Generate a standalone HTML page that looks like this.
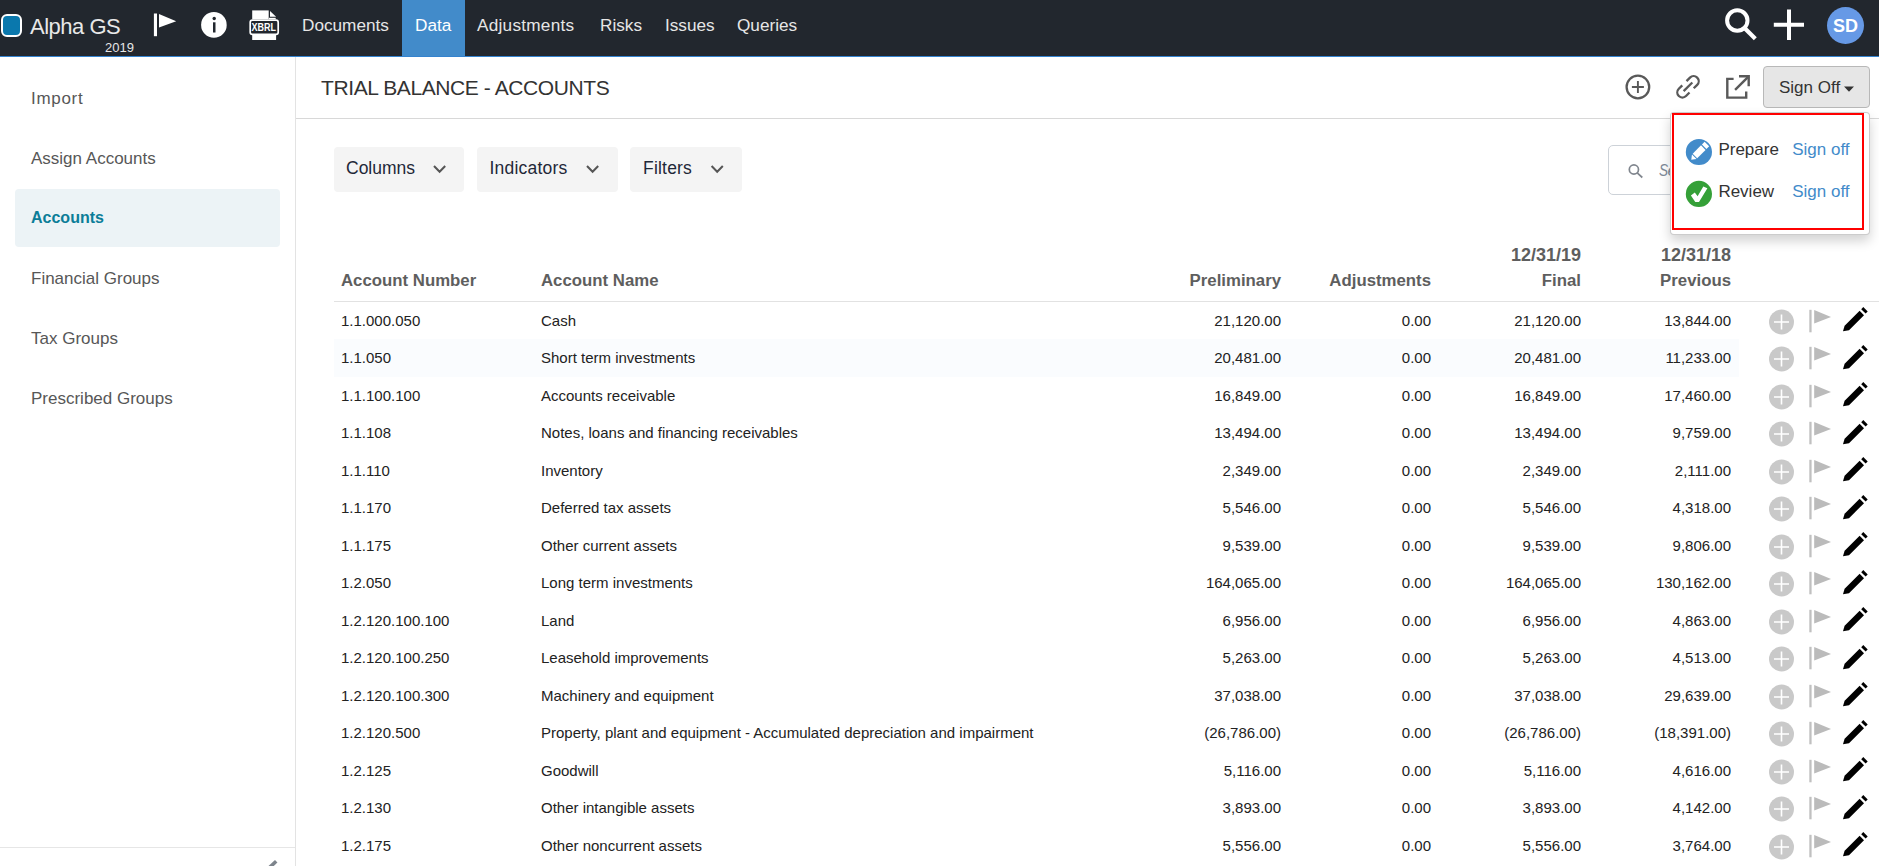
<!DOCTYPE html>
<html><head><meta charset="utf-8">
<style>
*{box-sizing:border-box;margin:0;padding:0}
html,body{width:1879px;height:866px;overflow:hidden;background:#fff;font-family:"Liberation Sans",sans-serif;position:relative}
.abs{position:absolute}
svg{display:block}
#nav{position:absolute;left:0;top:0;width:1879px;height:56px;background:#22272e}
#navline{position:absolute;left:0;top:56px;width:1879px;height:1px;background:#3483cf}
.nt{position:absolute;top:17.4px;font-size:17.2px;line-height:1;color:#e6e6e6;white-space:nowrap}
#datatab{position:absolute;left:402px;top:0;width:63px;height:56px;background:#428bca}
#side{position:absolute;left:0;top:57px;width:296px;height:809px;border-right:1px solid #e3e3e3}
.si{position:absolute;left:31px;font-size:17px;line-height:1;color:#575757;white-space:nowrap}
#active{position:absolute;left:15px;top:189px;width:265px;height:58px;background:#ecf3f6;border-radius:4px}
#title{position:absolute;left:321px;top:76.6px;font-size:21px;letter-spacing:-0.4px;line-height:1;color:#333;white-space:nowrap}
#hdrline{position:absolute;left:296px;top:118px;width:1583px;height:1px;background:#d8d8d8}
.fb{position:absolute;top:147px;height:44.5px;background:#f4f4f4;border-radius:4px}
.fbt{position:absolute;top:160px;font-size:17.5px;line-height:1;color:#1f2838;white-space:nowrap}
.th{position:absolute;font-size:16.8px;line-height:1;font-weight:bold;color:#5e5e5e;white-space:nowrap}
#thline{position:absolute;left:334px;top:301px;width:1545px;height:1px;background:#e2e2e2}
.td{position:absolute;font-size:15px;line-height:1;color:#222;white-space:nowrap}
.r{text-align:right}
</style></head><body>
<div id="nav"></div>
<div id="navline"></div>
<div id="datatab"></div>
<!-- logo -->
<div class="abs" style="left:1.1px;top:14.2px;width:21.4px;height:22.4px;border:2.4px solid #fff;border-radius:6px;background:#0a78ad"></div>
<div class="abs" style="left:30px;top:16.3px;font-size:22px;letter-spacing:-0.5px;line-height:1;color:#e8e8e8;white-space:nowrap">Alpha GS</div>
<div class="abs" style="left:105px;top:40.8px;font-size:13px;line-height:1;color:#e6e6e6">2019</div>
<!-- flag -->
<svg class="abs" style="left:150px;top:10px" width="30" height="30" viewBox="0 0 30 30"><rect x="3.9" y="3.5" width="3.1" height="22.7" fill="#fff"/><path d="M9 3.9L26.2 11.2L9 17.4Z" fill="#fff"/></svg>
<!-- info -->
<svg class="abs" style="left:200px;top:11px" width="28" height="28" viewBox="0 0 28 28"><circle cx="13.9" cy="13.9" r="12.8" fill="#fff"/><circle cx="14.2" cy="7.5" r="1.7" fill="#22272e"/><rect x="13" y="11.3" width="2.5" height="10.2" fill="#22272e"/></svg>
<!-- xbrl -->
<svg class="abs" style="left:245px;top:6px" width="40" height="38" viewBox="0 0 40 38"><rect x="7.2" y="4.4" width="16.5" height="8.8" fill="#fff"/><path d="M25 5L31.1 10.7H25Z" fill="#fff"/><rect x="23.9" y="11.8" width="6.8" height="1.4" fill="#fff"/><rect x="5.2" y="14.2" width="28" height="14.2" rx="2.2" fill="#22272e" stroke="#fff" stroke-width="1.7"/><text x="18.8" y="25" font-family="Liberation Sans" font-weight="bold" font-size="10.2" fill="#fff" text-anchor="middle" textLength="24.5" lengthAdjust="spacingAndGlyphs">XBRL</text><rect x="7.2" y="28.6" width="23.9" height="5.4" fill="#fff"/></svg>
<div class="nt" style="left:302px">Documents</div>
<div class="nt" style="left:415px;color:#fff">Data</div>
<div class="nt" style="left:477px;letter-spacing:0.25px">Adjustments</div>
<div class="nt" style="left:600px">Risks</div>
<div class="nt" style="left:665px">Issues</div>
<div class="nt" style="left:737px">Queries</div>
<!-- right nav -->
<svg class="abs" style="left:1720px;top:4px" width="42" height="42" viewBox="0 0 42 42"><circle cx="17.3" cy="16.5" r="10.2" fill="none" stroke="#fff" stroke-width="4"/><path d="M24.5 24L35.3 34.8" stroke="#fff" stroke-width="4.2"/></svg>
<svg class="abs" style="left:1770px;top:6px" width="38" height="38" viewBox="0 0 38 38"><path d="M19 3.5V34M3.8 18.8H34" stroke="#fff" stroke-width="4"/></svg>
<div class="abs" style="left:1826.8px;top:6.8px;width:37.4px;height:37.4px;border-radius:50%;background:#6699e6"></div>
<div class="abs" style="left:1827px;width:37px;top:16.7px;font-size:18px;line-height:1;font-weight:bold;color:#fff;text-align:center">SD</div>

<div id="side"></div>
<div id="active"></div>
<div class="si" style="top:90.1px;letter-spacing:0.7px">Import</div>
<div class="si" style="top:150.1px">Assign Accounts</div>
<div class="si" style="color:#0b7d98;font-weight:bold;font-size:16px;top:210.2px">Accounts</div>
<div class="si" style="top:270.1px">Financial Groups</div>
<div class="si" style="top:330.1px">Tax Groups</div>
<div class="si" style="top:390.1px">Prescribed Groups</div>
<div class="abs" style="left:0;top:847px;width:295px;height:1px;background:#e6e6e6"></div>
<svg class="abs" style="left:262px;top:855px" width="20" height="11" viewBox="0 0 20 11"><path d="M7 13L14.2 6.3" stroke="#7d848c" stroke-width="3.6"/></svg>

<div id="title">TRIAL BALANCE - ACCOUNTS</div>
<div id="hdrline"></div>
<!-- header icons -->
<svg class="abs" style="left:1620px;top:70px" width="136" height="34" viewBox="0 0 136 34">
<circle cx="17.9" cy="17" r="11.3" fill="none" stroke="#595959" stroke-width="2.3"/>
<path d="M17.9 10.9V23.1M11.9 17H23.9" stroke="#595959" stroke-width="1.9"/>
<g transform="translate(68 16.8) rotate(-45)" fill="none" stroke="#595959" stroke-width="2.3">
<path d="M3 -5.1H7.9A5.1 5.1 0 0 1 7.9 5.1H3"/>
<path d="M-3 5.1H-7.9A5.1 5.1 0 0 1 -7.9 -5.1H-3"/>
<path d="M-6.2 0H6.1"/>
</g>
<path d="M113.6 8.9H107.3V27.6H126.2V21.4" fill="none" stroke="#595959" stroke-width="2.4"/>
<path d="M119 6.2H128.7V16.3" fill="none" stroke="#595959" stroke-width="2.4"/>
<path d="M115.1 19.9L128.4 6.6" stroke="#595959" stroke-width="2.4"/>
</svg>
<div class="abs" style="left:1763px;top:66px;width:107px;height:42px;background:#e6e6e6;border:1px solid #b8b8b8;border-radius:4px"></div>
<div class="abs" style="left:1779px;top:78.8px;font-size:17px;line-height:1;color:#333;white-space:nowrap">Sign Off</div>
<svg class="abs" style="left:1843px;top:85px" width="12" height="8" viewBox="0 0 12 8"><path d="M1 1.5H11L6 6.8Z" fill="#333"/></svg>

<div class="fb" style="left:334px;width:130px"></div>
<div class="fb" style="left:477px;width:141px"></div>
<div class="fb" style="left:630px;width:112px"></div>
<div class="fbt" style="left:346px">Columns</div>
<div class="fbt" style="left:489.5px;letter-spacing:0.2px">Indicators</div>
<div class="fbt" style="left:643px;letter-spacing:0.2px">Filters</div>
<svg class="abs" style="left:430px;top:162px" width="320" height="14" viewBox="0 0 320 14"><g fill="none" stroke="#555" stroke-width="2"><path d="M4 4L9.6 9.8L15.2 4"/><path d="M157 4L162.6 9.8L168.2 4"/><path d="M281.6 4L287.2 9.8L292.8 4"/></g></svg>

<!-- search -->
<div class="abs" style="left:1608px;top:145px;width:250px;height:50px;border:1px solid #cdd2d8;border-radius:5px;background:#fff"></div>
<svg class="abs" style="left:1625px;top:160px" width="22" height="22" viewBox="0 0 22 22"><circle cx="8.9" cy="9.5" r="4.6" fill="none" stroke="#80868e" stroke-width="1.7"/><path d="M12.2 12.8L17.3 17.5" stroke="#80868e" stroke-width="1.7"/></svg>
<div class="abs" style="left:1658.5px;top:162.2px;font-size:17px;line-height:1;color:#7e8a99;font-style:italic;white-space:nowrap;transform:scaleX(0.8);transform-origin:0 0">S</div><div class="abs" style="left:1667.5px;top:162.2px;font-size:17px;line-height:1;color:#7e8a99;font-style:italic;white-space:nowrap">e</div>

<!-- table header -->
<div class="th" style="left:341px;top:272.7px">Account Number</div>
<div class="th" style="left:541px;top:272.7px">Account Name</div>
<div class="th r" style="right:598px;top:272.7px">Preliminary</div>
<div class="th r" style="right:448px;top:272.7px">Adjustments</div>
<div class="th r" style="right:298px;top:246.4px;font-size:18px">12/31/19</div>
<div class="th r" style="right:298px;top:272.7px">Final</div>
<div class="th r" style="right:148px;top:246.4px;font-size:18px">12/31/18</div>
<div class="th r" style="right:148px;top:272.7px">Previous</div>
<div id="thline"></div>
<div class="td" style="left:341px;top:312.60px">1.1.000.050</div>
<div class="td" style="left:541px;top:312.60px">Cash</div>
<div class="td r" style="right:598px;top:312.60px">21,120.00</div>
<div class="td r" style="right:448px;top:312.60px">0.00</div>
<div class="td r" style="right:298px;top:312.60px">21,120.00</div>
<div class="td r" style="right:148px;top:312.60px">13,844.00</div>
<svg class="abs" style="left:1768px;top:308.5px" width="27" height="26" viewBox="0 0 27 26"><circle cx="13.5" cy="13" r="12.5" fill="#c9c9c9"/><path d="M13.5 5.5v15M6 13h15" stroke="#fff" stroke-width="1.6"/></svg>
<svg class="abs" style="left:1808px;top:308.5px" width="24" height="25" viewBox="0 0 24 25"><rect x="1.3" y="0.8" width="2.3" height="22.5" fill="#c0c0c0"/><path d="M6.2 0.9L23 8L6.2 14.5Z" fill="#bbb"/></svg>
<svg class="abs" style="left:1842px;top:306.0px" width="26" height="27" viewBox="0 0 26 27"><path d="M1 25.3L2.6 19.8L17.6 4.8L22 9.2L7 24.2Z" fill="#000"/><path d="M19.2 3.2L21.3 1.1L25.7 5.5L23.6 7.6Z" fill="#000"/></svg>
<div class="abs" style="left:334px;top:339px;width:1405px;height:38px;background:#fafcfe"></div>
<div class="td" style="left:341px;top:350.10px">1.1.050</div>
<div class="td" style="left:541px;top:350.10px">Short term investments</div>
<div class="td r" style="right:598px;top:350.10px">20,481.00</div>
<div class="td r" style="right:448px;top:350.10px">0.00</div>
<div class="td r" style="right:298px;top:350.10px">20,481.00</div>
<div class="td r" style="right:148px;top:350.10px">11,233.00</div>
<svg class="abs" style="left:1768px;top:346.0px" width="27" height="26" viewBox="0 0 27 26"><circle cx="13.5" cy="13" r="12.5" fill="#c9c9c9"/><path d="M13.5 5.5v15M6 13h15" stroke="#fff" stroke-width="1.6"/></svg>
<svg class="abs" style="left:1808px;top:346.0px" width="24" height="25" viewBox="0 0 24 25"><rect x="1.3" y="0.8" width="2.3" height="22.5" fill="#c0c0c0"/><path d="M6.2 0.9L23 8L6.2 14.5Z" fill="#bbb"/></svg>
<svg class="abs" style="left:1842px;top:343.5px" width="26" height="27" viewBox="0 0 26 27"><path d="M1 25.3L2.6 19.8L17.6 4.8L22 9.2L7 24.2Z" fill="#000"/><path d="M19.2 3.2L21.3 1.1L25.7 5.5L23.6 7.6Z" fill="#000"/></svg>
<div class="td" style="left:341px;top:387.60px">1.1.100.100</div>
<div class="td" style="left:541px;top:387.60px">Accounts receivable</div>
<div class="td r" style="right:598px;top:387.60px">16,849.00</div>
<div class="td r" style="right:448px;top:387.60px">0.00</div>
<div class="td r" style="right:298px;top:387.60px">16,849.00</div>
<div class="td r" style="right:148px;top:387.60px">17,460.00</div>
<svg class="abs" style="left:1768px;top:383.5px" width="27" height="26" viewBox="0 0 27 26"><circle cx="13.5" cy="13" r="12.5" fill="#c9c9c9"/><path d="M13.5 5.5v15M6 13h15" stroke="#fff" stroke-width="1.6"/></svg>
<svg class="abs" style="left:1808px;top:383.5px" width="24" height="25" viewBox="0 0 24 25"><rect x="1.3" y="0.8" width="2.3" height="22.5" fill="#c0c0c0"/><path d="M6.2 0.9L23 8L6.2 14.5Z" fill="#bbb"/></svg>
<svg class="abs" style="left:1842px;top:381.0px" width="26" height="27" viewBox="0 0 26 27"><path d="M1 25.3L2.6 19.8L17.6 4.8L22 9.2L7 24.2Z" fill="#000"/><path d="M19.2 3.2L21.3 1.1L25.7 5.5L23.6 7.6Z" fill="#000"/></svg>
<div class="td" style="left:341px;top:425.10px">1.1.108</div>
<div class="td" style="left:541px;top:425.10px">Notes, loans and financing receivables</div>
<div class="td r" style="right:598px;top:425.10px">13,494.00</div>
<div class="td r" style="right:448px;top:425.10px">0.00</div>
<div class="td r" style="right:298px;top:425.10px">13,494.00</div>
<div class="td r" style="right:148px;top:425.10px">9,759.00</div>
<svg class="abs" style="left:1768px;top:421.0px" width="27" height="26" viewBox="0 0 27 26"><circle cx="13.5" cy="13" r="12.5" fill="#c9c9c9"/><path d="M13.5 5.5v15M6 13h15" stroke="#fff" stroke-width="1.6"/></svg>
<svg class="abs" style="left:1808px;top:421.0px" width="24" height="25" viewBox="0 0 24 25"><rect x="1.3" y="0.8" width="2.3" height="22.5" fill="#c0c0c0"/><path d="M6.2 0.9L23 8L6.2 14.5Z" fill="#bbb"/></svg>
<svg class="abs" style="left:1842px;top:418.5px" width="26" height="27" viewBox="0 0 26 27"><path d="M1 25.3L2.6 19.8L17.6 4.8L22 9.2L7 24.2Z" fill="#000"/><path d="M19.2 3.2L21.3 1.1L25.7 5.5L23.6 7.6Z" fill="#000"/></svg>
<div class="td" style="left:341px;top:462.60px">1.1.110</div>
<div class="td" style="left:541px;top:462.60px">Inventory</div>
<div class="td r" style="right:598px;top:462.60px">2,349.00</div>
<div class="td r" style="right:448px;top:462.60px">0.00</div>
<div class="td r" style="right:298px;top:462.60px">2,349.00</div>
<div class="td r" style="right:148px;top:462.60px">2,111.00</div>
<svg class="abs" style="left:1768px;top:458.5px" width="27" height="26" viewBox="0 0 27 26"><circle cx="13.5" cy="13" r="12.5" fill="#c9c9c9"/><path d="M13.5 5.5v15M6 13h15" stroke="#fff" stroke-width="1.6"/></svg>
<svg class="abs" style="left:1808px;top:458.5px" width="24" height="25" viewBox="0 0 24 25"><rect x="1.3" y="0.8" width="2.3" height="22.5" fill="#c0c0c0"/><path d="M6.2 0.9L23 8L6.2 14.5Z" fill="#bbb"/></svg>
<svg class="abs" style="left:1842px;top:456.0px" width="26" height="27" viewBox="0 0 26 27"><path d="M1 25.3L2.6 19.8L17.6 4.8L22 9.2L7 24.2Z" fill="#000"/><path d="M19.2 3.2L21.3 1.1L25.7 5.5L23.6 7.6Z" fill="#000"/></svg>
<div class="td" style="left:341px;top:500.10px">1.1.170</div>
<div class="td" style="left:541px;top:500.10px">Deferred tax assets</div>
<div class="td r" style="right:598px;top:500.10px">5,546.00</div>
<div class="td r" style="right:448px;top:500.10px">0.00</div>
<div class="td r" style="right:298px;top:500.10px">5,546.00</div>
<div class="td r" style="right:148px;top:500.10px">4,318.00</div>
<svg class="abs" style="left:1768px;top:496.0px" width="27" height="26" viewBox="0 0 27 26"><circle cx="13.5" cy="13" r="12.5" fill="#c9c9c9"/><path d="M13.5 5.5v15M6 13h15" stroke="#fff" stroke-width="1.6"/></svg>
<svg class="abs" style="left:1808px;top:496.0px" width="24" height="25" viewBox="0 0 24 25"><rect x="1.3" y="0.8" width="2.3" height="22.5" fill="#c0c0c0"/><path d="M6.2 0.9L23 8L6.2 14.5Z" fill="#bbb"/></svg>
<svg class="abs" style="left:1842px;top:493.5px" width="26" height="27" viewBox="0 0 26 27"><path d="M1 25.3L2.6 19.8L17.6 4.8L22 9.2L7 24.2Z" fill="#000"/><path d="M19.2 3.2L21.3 1.1L25.7 5.5L23.6 7.6Z" fill="#000"/></svg>
<div class="td" style="left:341px;top:537.60px">1.1.175</div>
<div class="td" style="left:541px;top:537.60px">Other current assets</div>
<div class="td r" style="right:598px;top:537.60px">9,539.00</div>
<div class="td r" style="right:448px;top:537.60px">0.00</div>
<div class="td r" style="right:298px;top:537.60px">9,539.00</div>
<div class="td r" style="right:148px;top:537.60px">9,806.00</div>
<svg class="abs" style="left:1768px;top:533.5px" width="27" height="26" viewBox="0 0 27 26"><circle cx="13.5" cy="13" r="12.5" fill="#c9c9c9"/><path d="M13.5 5.5v15M6 13h15" stroke="#fff" stroke-width="1.6"/></svg>
<svg class="abs" style="left:1808px;top:533.5px" width="24" height="25" viewBox="0 0 24 25"><rect x="1.3" y="0.8" width="2.3" height="22.5" fill="#c0c0c0"/><path d="M6.2 0.9L23 8L6.2 14.5Z" fill="#bbb"/></svg>
<svg class="abs" style="left:1842px;top:531.0px" width="26" height="27" viewBox="0 0 26 27"><path d="M1 25.3L2.6 19.8L17.6 4.8L22 9.2L7 24.2Z" fill="#000"/><path d="M19.2 3.2L21.3 1.1L25.7 5.5L23.6 7.6Z" fill="#000"/></svg>
<div class="td" style="left:341px;top:575.10px">1.2.050</div>
<div class="td" style="left:541px;top:575.10px">Long term investments</div>
<div class="td r" style="right:598px;top:575.10px">164,065.00</div>
<div class="td r" style="right:448px;top:575.10px">0.00</div>
<div class="td r" style="right:298px;top:575.10px">164,065.00</div>
<div class="td r" style="right:148px;top:575.10px">130,162.00</div>
<svg class="abs" style="left:1768px;top:571.0px" width="27" height="26" viewBox="0 0 27 26"><circle cx="13.5" cy="13" r="12.5" fill="#c9c9c9"/><path d="M13.5 5.5v15M6 13h15" stroke="#fff" stroke-width="1.6"/></svg>
<svg class="abs" style="left:1808px;top:571.0px" width="24" height="25" viewBox="0 0 24 25"><rect x="1.3" y="0.8" width="2.3" height="22.5" fill="#c0c0c0"/><path d="M6.2 0.9L23 8L6.2 14.5Z" fill="#bbb"/></svg>
<svg class="abs" style="left:1842px;top:568.5px" width="26" height="27" viewBox="0 0 26 27"><path d="M1 25.3L2.6 19.8L17.6 4.8L22 9.2L7 24.2Z" fill="#000"/><path d="M19.2 3.2L21.3 1.1L25.7 5.5L23.6 7.6Z" fill="#000"/></svg>
<div class="td" style="left:341px;top:612.60px">1.2.120.100.100</div>
<div class="td" style="left:541px;top:612.60px">Land</div>
<div class="td r" style="right:598px;top:612.60px">6,956.00</div>
<div class="td r" style="right:448px;top:612.60px">0.00</div>
<div class="td r" style="right:298px;top:612.60px">6,956.00</div>
<div class="td r" style="right:148px;top:612.60px">4,863.00</div>
<svg class="abs" style="left:1768px;top:608.5px" width="27" height="26" viewBox="0 0 27 26"><circle cx="13.5" cy="13" r="12.5" fill="#c9c9c9"/><path d="M13.5 5.5v15M6 13h15" stroke="#fff" stroke-width="1.6"/></svg>
<svg class="abs" style="left:1808px;top:608.5px" width="24" height="25" viewBox="0 0 24 25"><rect x="1.3" y="0.8" width="2.3" height="22.5" fill="#c0c0c0"/><path d="M6.2 0.9L23 8L6.2 14.5Z" fill="#bbb"/></svg>
<svg class="abs" style="left:1842px;top:606.0px" width="26" height="27" viewBox="0 0 26 27"><path d="M1 25.3L2.6 19.8L17.6 4.8L22 9.2L7 24.2Z" fill="#000"/><path d="M19.2 3.2L21.3 1.1L25.7 5.5L23.6 7.6Z" fill="#000"/></svg>
<div class="td" style="left:341px;top:650.10px">1.2.120.100.250</div>
<div class="td" style="left:541px;top:650.10px">Leasehold improvements</div>
<div class="td r" style="right:598px;top:650.10px">5,263.00</div>
<div class="td r" style="right:448px;top:650.10px">0.00</div>
<div class="td r" style="right:298px;top:650.10px">5,263.00</div>
<div class="td r" style="right:148px;top:650.10px">4,513.00</div>
<svg class="abs" style="left:1768px;top:646.0px" width="27" height="26" viewBox="0 0 27 26"><circle cx="13.5" cy="13" r="12.5" fill="#c9c9c9"/><path d="M13.5 5.5v15M6 13h15" stroke="#fff" stroke-width="1.6"/></svg>
<svg class="abs" style="left:1808px;top:646.0px" width="24" height="25" viewBox="0 0 24 25"><rect x="1.3" y="0.8" width="2.3" height="22.5" fill="#c0c0c0"/><path d="M6.2 0.9L23 8L6.2 14.5Z" fill="#bbb"/></svg>
<svg class="abs" style="left:1842px;top:643.5px" width="26" height="27" viewBox="0 0 26 27"><path d="M1 25.3L2.6 19.8L17.6 4.8L22 9.2L7 24.2Z" fill="#000"/><path d="M19.2 3.2L21.3 1.1L25.7 5.5L23.6 7.6Z" fill="#000"/></svg>
<div class="td" style="left:341px;top:687.60px">1.2.120.100.300</div>
<div class="td" style="left:541px;top:687.60px">Machinery and equipment</div>
<div class="td r" style="right:598px;top:687.60px">37,038.00</div>
<div class="td r" style="right:448px;top:687.60px">0.00</div>
<div class="td r" style="right:298px;top:687.60px">37,038.00</div>
<div class="td r" style="right:148px;top:687.60px">29,639.00</div>
<svg class="abs" style="left:1768px;top:683.5px" width="27" height="26" viewBox="0 0 27 26"><circle cx="13.5" cy="13" r="12.5" fill="#c9c9c9"/><path d="M13.5 5.5v15M6 13h15" stroke="#fff" stroke-width="1.6"/></svg>
<svg class="abs" style="left:1808px;top:683.5px" width="24" height="25" viewBox="0 0 24 25"><rect x="1.3" y="0.8" width="2.3" height="22.5" fill="#c0c0c0"/><path d="M6.2 0.9L23 8L6.2 14.5Z" fill="#bbb"/></svg>
<svg class="abs" style="left:1842px;top:681.0px" width="26" height="27" viewBox="0 0 26 27"><path d="M1 25.3L2.6 19.8L17.6 4.8L22 9.2L7 24.2Z" fill="#000"/><path d="M19.2 3.2L21.3 1.1L25.7 5.5L23.6 7.6Z" fill="#000"/></svg>
<div class="td" style="left:341px;top:725.10px">1.2.120.500</div>
<div class="td" style="left:541px;top:725.10px">Property, plant and equipment - Accumulated depreciation and impairment</div>
<div class="td r" style="right:598px;top:725.10px">(26,786.00)</div>
<div class="td r" style="right:448px;top:725.10px">0.00</div>
<div class="td r" style="right:298px;top:725.10px">(26,786.00)</div>
<div class="td r" style="right:148px;top:725.10px">(18,391.00)</div>
<svg class="abs" style="left:1768px;top:721.0px" width="27" height="26" viewBox="0 0 27 26"><circle cx="13.5" cy="13" r="12.5" fill="#c9c9c9"/><path d="M13.5 5.5v15M6 13h15" stroke="#fff" stroke-width="1.6"/></svg>
<svg class="abs" style="left:1808px;top:721.0px" width="24" height="25" viewBox="0 0 24 25"><rect x="1.3" y="0.8" width="2.3" height="22.5" fill="#c0c0c0"/><path d="M6.2 0.9L23 8L6.2 14.5Z" fill="#bbb"/></svg>
<svg class="abs" style="left:1842px;top:718.5px" width="26" height="27" viewBox="0 0 26 27"><path d="M1 25.3L2.6 19.8L17.6 4.8L22 9.2L7 24.2Z" fill="#000"/><path d="M19.2 3.2L21.3 1.1L25.7 5.5L23.6 7.6Z" fill="#000"/></svg>
<div class="td" style="left:341px;top:762.60px">1.2.125</div>
<div class="td" style="left:541px;top:762.60px">Goodwill</div>
<div class="td r" style="right:598px;top:762.60px">5,116.00</div>
<div class="td r" style="right:448px;top:762.60px">0.00</div>
<div class="td r" style="right:298px;top:762.60px">5,116.00</div>
<div class="td r" style="right:148px;top:762.60px">4,616.00</div>
<svg class="abs" style="left:1768px;top:758.5px" width="27" height="26" viewBox="0 0 27 26"><circle cx="13.5" cy="13" r="12.5" fill="#c9c9c9"/><path d="M13.5 5.5v15M6 13h15" stroke="#fff" stroke-width="1.6"/></svg>
<svg class="abs" style="left:1808px;top:758.5px" width="24" height="25" viewBox="0 0 24 25"><rect x="1.3" y="0.8" width="2.3" height="22.5" fill="#c0c0c0"/><path d="M6.2 0.9L23 8L6.2 14.5Z" fill="#bbb"/></svg>
<svg class="abs" style="left:1842px;top:756.0px" width="26" height="27" viewBox="0 0 26 27"><path d="M1 25.3L2.6 19.8L17.6 4.8L22 9.2L7 24.2Z" fill="#000"/><path d="M19.2 3.2L21.3 1.1L25.7 5.5L23.6 7.6Z" fill="#000"/></svg>
<div class="td" style="left:341px;top:800.10px">1.2.130</div>
<div class="td" style="left:541px;top:800.10px">Other intangible assets</div>
<div class="td r" style="right:598px;top:800.10px">3,893.00</div>
<div class="td r" style="right:448px;top:800.10px">0.00</div>
<div class="td r" style="right:298px;top:800.10px">3,893.00</div>
<div class="td r" style="right:148px;top:800.10px">4,142.00</div>
<svg class="abs" style="left:1768px;top:796.0px" width="27" height="26" viewBox="0 0 27 26"><circle cx="13.5" cy="13" r="12.5" fill="#c9c9c9"/><path d="M13.5 5.5v15M6 13h15" stroke="#fff" stroke-width="1.6"/></svg>
<svg class="abs" style="left:1808px;top:796.0px" width="24" height="25" viewBox="0 0 24 25"><rect x="1.3" y="0.8" width="2.3" height="22.5" fill="#c0c0c0"/><path d="M6.2 0.9L23 8L6.2 14.5Z" fill="#bbb"/></svg>
<svg class="abs" style="left:1842px;top:793.5px" width="26" height="27" viewBox="0 0 26 27"><path d="M1 25.3L2.6 19.8L17.6 4.8L22 9.2L7 24.2Z" fill="#000"/><path d="M19.2 3.2L21.3 1.1L25.7 5.5L23.6 7.6Z" fill="#000"/></svg>
<div class="td" style="left:341px;top:837.60px">1.2.175</div>
<div class="td" style="left:541px;top:837.60px">Other noncurrent assets</div>
<div class="td r" style="right:598px;top:837.60px">5,556.00</div>
<div class="td r" style="right:448px;top:837.60px">0.00</div>
<div class="td r" style="right:298px;top:837.60px">5,556.00</div>
<div class="td r" style="right:148px;top:837.60px">3,764.00</div>
<svg class="abs" style="left:1768px;top:833.5px" width="27" height="26" viewBox="0 0 27 26"><circle cx="13.5" cy="13" r="12.5" fill="#c9c9c9"/><path d="M13.5 5.5v15M6 13h15" stroke="#fff" stroke-width="1.6"/></svg>
<svg class="abs" style="left:1808px;top:833.5px" width="24" height="25" viewBox="0 0 24 25"><rect x="1.3" y="0.8" width="2.3" height="22.5" fill="#c0c0c0"/><path d="M6.2 0.9L23 8L6.2 14.5Z" fill="#bbb"/></svg>
<svg class="abs" style="left:1842px;top:831.0px" width="26" height="27" viewBox="0 0 26 27"><path d="M1 25.3L2.6 19.8L17.6 4.8L22 9.2L7 24.2Z" fill="#000"/><path d="M19.2 3.2L21.3 1.1L25.7 5.5L23.6 7.6Z" fill="#000"/></svg>

<!-- dropdown -->
<div class="abs" style="left:1670px;top:111.5px;width:199.5px;height:123px;background:#fff;border:1px solid rgba(0,0,0,0.2);border-radius:4px;box-shadow:0 6px 12px rgba(0,0,0,0.175)"></div>
<div class="abs" style="left:1672.2px;top:113.1px;width:192px;height:116.6px;border:2.2px solid #f00"></div>
<svg class="abs" style="left:1680px;top:134px" width="40" height="80" viewBox="0 0 40 80">
<circle cx="18.9" cy="18" r="13.1" fill="#428bca"/>
<g transform="translate(18.9 18) rotate(-45)" fill="#fff">
<path d="M-10.8 0L-6.6 -3.2V3.2Z"/>
<rect x="-5.6" y="-3.2" width="11.8" height="6.4"/>
<rect x="7.5" y="-3.2" width="3.8" height="6.4"/>
</g>
<circle cx="18.9" cy="59.9" r="13.1" fill="#35a038"/>
<path d="M10.9 61.6L14.8 58.6L17.6 62.2L23.3 52.6L27.4 54.3L19 68.1H15.3Z" fill="#fff"/>
</svg>
<div class="abs" style="left:1718.4px;top:141.3px;font-size:17px;line-height:1;color:#333;white-space:nowrap">Prepare</div>
<div class="abs" style="left:1718.4px;top:183.3px;font-size:17px;line-height:1;color:#333;white-space:nowrap">Review</div>
<div class="abs" style="left:1792.2px;top:141.3px;font-size:17px;line-height:1;color:#428bca;white-space:nowrap">Sign off</div>
<div class="abs" style="left:1792.2px;top:183.3px;font-size:17px;line-height:1;color:#428bca;white-space:nowrap">Sign off</div>

</body></html>
